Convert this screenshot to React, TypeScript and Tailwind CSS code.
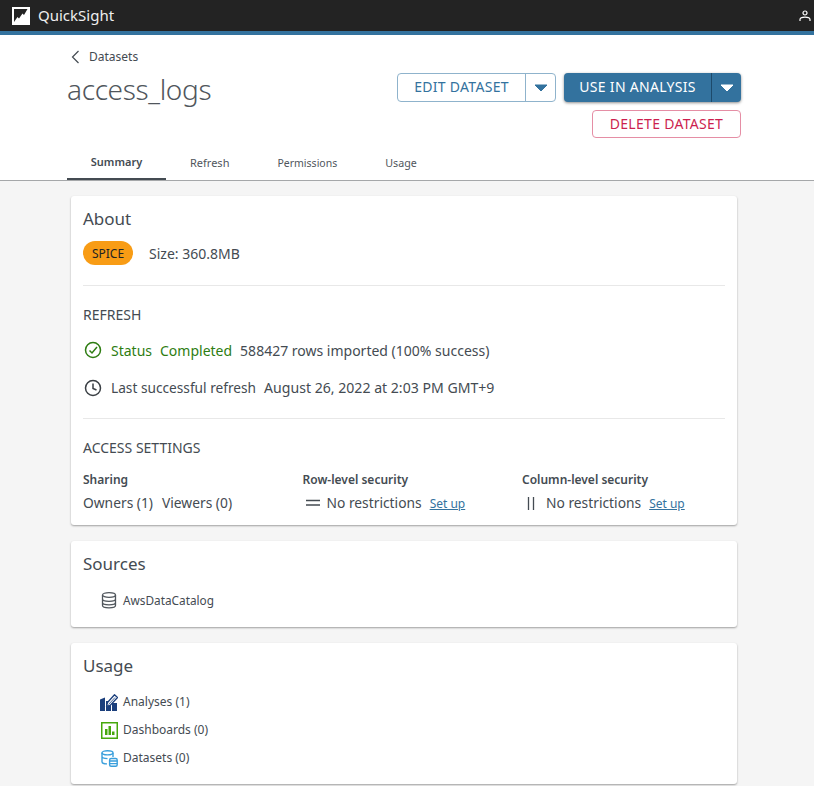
const font = { fontFamily: '"Noto Sans", "Open Sans", sans-serif' };

function Caret({ className }: { className: string }) {
  return (
    <svg width="14" height="8" viewBox="0 0 14 8" className={className}>
      <path d="M1 1h12L7 7z" fill="currentColor" stroke="currentColor" strokeLinejoin="round" />
    </svg>
  );
}

function AnalysesIcon() {
  return (
    <svg width="18" height="17" viewBox="0 0 18 17" className="ml-[-1px]">
      <path d="M0 5.500L5 3.500V17H0zM6 7h5v10H6zM12 9h5v8h-5z" fill="#1b3f7c" />
      <path d="M6.500 12.500l1-4L14.500 .8l3 2.700-7 7.500z" fill="#fff" stroke="#1b3f7c" strokeWidth="1.300" strokeLinejoin="round" />
      <path d="M8.500 10.500L15 3.500" stroke="#1b3f7c" strokeWidth="0.800" />
    </svg>
  );
}

function DashboardsIcon() {
  return (
    <svg width="17" height="17" viewBox="0 0 17 17">
      <rect x="0.750" y="0.750" width="15.500" height="15.500" fill="#fff" stroke="#46a80c" strokeWidth="1.500" />
      <path d="M4 7h2.500v6H4zM7.500 4H10v9H7.500zM11 9.500h2.500V13H11z" fill="#46a80c" />
    </svg>
  );
}

function DatasetsIcon() {
  return (
    <svg width="17" height="17" viewBox="0 0 17 17" fill="none" stroke="#3a9fdc" strokeWidth="1.400">
      <ellipse cx="6.500" cy="2.800" rx="5.500" ry="2.100" />
      <path d="M1 2.800v9c0 1.200 2.400 2.100 5 2.100M1 6.500c0 1.200 2.400 2.100 5.500 2.100M12 3v4" />
      <rect x="8.600" y="8.500" width="7.600" height="7.800" rx="1.500" fill="#fff" />
      <path d="M8.600 11h7.600M8.600 13.600h7.600" />
    </svg>
  );
}

function UsageRow({ icon, label }: { icon: React.ReactNode; label: string }) {
  return (
    <div className="flex h-[28px] items-center">
      <div className="flex w-[22px] shrink-0 justify-start">{icon}</div>
      <span className="text-[12px] text-[#444b52]">{label}</span>
    </div>
  );
}

function Card({ children, className }: { children: React.ReactNode; className: string }) {
  return (
    <section className={`rounded-[3px] bg-white px-3 shadow-[0_1px_2px_rgba(0,0,0,0.35)] ${className}`}>
      {children}
    </section>
  );
}

export default function App() {
  return (
    <div className="h-[786px] w-[814px] overflow-hidden bg-[#f5f5f5]" style={font}>
      {/* Top bar */}
      <header className="flex h-[31px] items-center justify-between bg-[#232323] pl-3 pr-[3px]">
        <div className="flex items-center gap-2">
          <svg width="18" height="18" viewBox="0 0 18 18">
            <rect width="18" height="18" fill="#fff" />
            <path d="M2 2h13.500L12 8l-1.500-1.500L7 11.500 5.500 10 2 15z" fill="#232323" />
          </svg>
          <span className="text-[15px] leading-none text-[#eeeeee]">QuickSight</span>
        </div>
        <svg width="12" height="12" viewBox="0 0 12 12" fill="none" stroke="#fff" strokeWidth="1.200">
          <circle cx="6" cy="3" r="2" />
          <path d="M1 11V9.500C1 8 3 7.200 6 7.200S11 8 11 9.500V11" />
        </svg>
      </header>
      <div className="h-[4px] bg-[#33729e]" />

      {/* Header */}
      <div className="h-[146px] border-b border-[#a5a7a9] bg-white pl-[67px] pr-[73px]">
        <div className="flex justify-between">
          <div>
            <div className="flex items-center gap-[9px] pl-[4px] pt-[13px] text-[#444b52]">
              <svg width="9" height="14" viewBox="0 0 9 14" fill="none" stroke="#444b52" strokeWidth="1.200">
                <path d="M7.500 1L1.500 7l6 6" />
              </svg>
              <span className="pt-[1px] text-[12px] leading-[16px]">Datasets</span>
            </div>
            <h1 className="mt-[5px] text-[28px] font-light leading-[38px] tracking-[-0.35px] text-[#50565c]">access_logs</h1>
          </div>
          <div className="flex flex-col items-end pt-[38px]">
            <div className="flex gap-2">
              <div className="flex h-[29px] items-stretch rounded-[4px] border border-[#8fb3cc] bg-white text-[#33729e]">
                <span className="flex w-[128px] items-center justify-center border-r border-[#8fb3cc] pb-[2px] text-[14px] tracking-[0.3px]">EDIT DATASET</span>
                <span className="flex w-[29px] items-center justify-center"><Caret className="text-[#33729e]" /></span>
              </div>
              <div className="flex h-[29px] items-stretch rounded-[4px] bg-[#33729e] text-white shadow-[0_1px_3px_rgba(0,0,0,0.45)]">
                <span className="flex w-[148px] items-center justify-center border-r border-[#1d4a6b] pb-[2px] text-[14px] tracking-[0.3px]">USE IN ANALYSIS</span>
                <span className="flex w-[29px] items-center justify-center"><Caret className="text-white" /></span>
              </div>
            </div>
            <div className="mt-[8px] flex h-[28px] w-[149px] items-center justify-center rounded-[4px] border border-[#e58ea5] bg-white pb-[1px] text-[14px] tracking-[0.3px] text-[#cc1f4f]">
              DELETE DATASET
            </div>
          </div>
        </div>
        {/* Tabs */}
        <nav className="mt-[9px] flex text-[11px]">
          <div className="flex h-[33px] w-[99px] items-center justify-center border-b-2 border-[#444b52] font-semibold text-[#444b52]">Summary</div>
          <div className="ml-[24px] flex h-[33px] items-center text-[#50565c]">Refresh</div>
          <div className="ml-[48px] flex h-[33px] items-center text-[10.500px] text-[#50565c]">Permissions</div>
          <div className="ml-[48px] flex h-[33px] items-center text-[10.700px] text-[#50565c]">Usage</div>
        </nav>
      </div>

      <main className="ml-[71px] flex w-[666px] flex-col gap-4 pt-[15px]">
        <Card className="h-[329px]">
          <h2 className="pt-[11px] text-[17px] leading-[24px] text-[#444b52]">About</h2>
          <div className="mt-[10px] flex items-center gap-4">
            <span className="flex h-[24px] w-[50px] items-center justify-center rounded-full bg-[#f89c15] pt-[1px] text-[12px] text-[#232323]">SPICE</span>
            <span className="text-[14px] text-[#444b52]">Size: 360.8MB</span>
          </div>
          <div className="mt-[20px] border-t border-[#e8e8e8]" />

          <h3 className="mt-[20px] text-[14px] leading-[18px] text-[#444b52]">REFRESH</h3>
          <div className="mt-[16px] flex h-[20px] items-center gap-[8px] pl-[1px] text-[14px]">
            <svg width="18" height="18" viewBox="0 0 18 18" fill="none" stroke="#2e7d12" strokeWidth="1.500" className="mr-[1px]">
              <circle cx="9" cy="9" r="7.500" />
              <path d="M5.500 9.500l2.500 2.500 5-6" />
            </svg>
            <span className="text-[#2e7d12]">Status</span>
            <span className="text-[#2e7d12]">Completed</span>
            <span className="text-[#444b52]">588427 rows imported (100% success)</span>
          </div>
          <div className="mt-[18px] flex h-[20px] items-center gap-[8px] pl-[1px] text-[14.100px] text-[#444b52]">
            <svg width="18" height="18" viewBox="0 0 18 18" fill="none" stroke="#3a3f44" strokeWidth="1.500" className="mr-[1px]">
              <circle cx="9" cy="9" r="7.500" />
              <path d="M9 4.500V9.500l3.500 1.500" />
            </svg>
            <span className="text-[13.700px]">Last successful refresh</span>
            <span>August 26, 2022 at 2:03 PM GMT+9</span>
          </div>
          <div className="mt-[20px] border-t border-[#e8e8e8]" />

          <h3 className="mt-[20px] text-[14px] leading-[18px] text-[#444b52]">ACCESS SETTINGS</h3>
          <div className="mt-[15px] grid grid-cols-[219.500px_219.500px_1fr] text-[#444b52]">
            <div>
              <div className="text-[12px] font-semibold leading-[16px]">Sharing</div>
              <div className="mt-[6px] flex h-[18px] items-center gap-[9px] text-[13.800px]">
                <span>Owners (1)</span>
                <span>Viewers (0)</span>
              </div>
            </div>
            <div>
              <div className="text-[12px] font-semibold leading-[16px]">Row-level security</div>
              <div className="mt-[6px] flex h-[18px] items-center text-[13.800px]">
                <svg width="14" height="8" viewBox="0 0 14 8" stroke="#444b52" strokeWidth="1.300" className="ml-[3px] mr-[7px]">
                  <path d="M0 1.500h14M0 6h14" />
                </svg>
                <span>No restrictions</span>
                <a className="ml-2 pt-[1px] text-[12px] text-[#33729e] underline">Set up</a>
              </div>
            </div>
            <div>
              <div className="text-[12px] font-semibold leading-[16px]">Column-level security</div>
              <div className="mt-[6px] flex h-[18px] items-center text-[13.800px]">
                <svg width="8" height="13" viewBox="0 0 8 13" stroke="#444b52" strokeWidth="1.300" className="ml-[5px] mr-[11px]">
                  <path d="M1.500 0v13M6.500 0v13" />
                </svg>
                <span>No restrictions</span>
                <a className="ml-2 pt-[1px] text-[12px] text-[#33729e] underline">Set up</a>
              </div>
            </div>
          </div>
        </Card>

        <Card className="h-[86px]">
          <h2 className="pt-[11px] text-[17px] leading-[24px] text-[#444b52]">Sources</h2>
          <div className="mt-[16px] flex items-center pl-[18px]">
            <svg width="16" height="17" viewBox="0 0 16 17" fill="none" stroke="#50565c" strokeWidth="1.300" className="mr-[6px]">
              <ellipse cx="8" cy="3" rx="6.500" ry="2.300" />
              <path d="M1.500 3v10.500c0 1.300 3 2.300 6.500 2.300s6.500-1 6.500-2.300V3M1.500 7c0 1.300 3 2.300 6.500 2.300s6.500-1 6.500-2.300M1.500 10.500c0 1.300 3 2.300 6.500 2.300s6.500-1 6.500-2.300" />
            </svg>
            <span className="text-[11.800px] text-[#444b52]">AwsDataCatalog</span>
          </div>
        </Card>

        <Card className="h-[141px]">
          <h2 className="pt-[11px] text-[17px] leading-[24px] text-[#444b52]">Usage</h2>
          <div className="mt-[10px] pl-[18px]">
            <UsageRow icon={<AnalysesIcon />} label="Analyses (1)" />
            <UsageRow icon={<DashboardsIcon />} label="Dashboards (0)" />
            <UsageRow icon={<DatasetsIcon />} label="Datasets (0)" />
          </div>
        </Card>
      </main>
    </div>
  );
}
